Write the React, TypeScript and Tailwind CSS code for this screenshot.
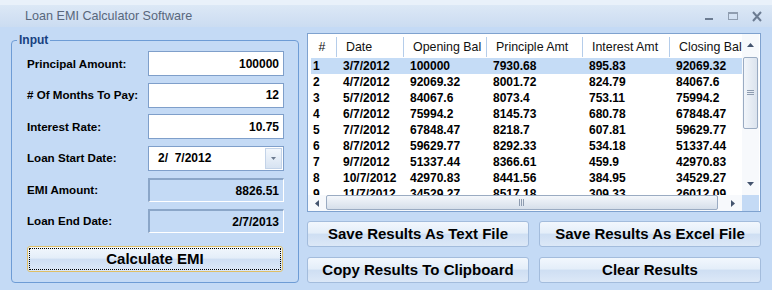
const columns = [
  { label: "#", rowW: "w-[25px]", headW: "w-[28px]" },
  { label: "Date", rowW: "w-[67px]", headW: "w-[67px]" },
  { label: "Opening Bal", rowW: "w-[83px]", headW: "w-[83px]" },
  { label: "Principle Amt", rowW: "w-[96px]", headW: "w-[96px]" },
  { label: "Interest Amt", rowW: "w-[87px]", headW: "w-[87px]" },
  { label: "Closing Bal", rowW: "w-[90px]", headW: "w-[90px]" },
];

const schedule = [
  ["1", "3/7/2012", "100000", "7930.68", "895.83", "92069.32"],
  ["2", "4/7/2012", "92069.32", "8001.72", "824.79", "84067.6"],
  ["3", "5/7/2012", "84067.6", "8073.4", "753.11", "75994.2"],
  ["4", "6/7/2012", "75994.2", "8145.73", "680.78", "67848.47"],
  ["5", "7/7/2012", "67848.47", "8218.7", "607.81", "59629.77"],
  ["6", "8/7/2012", "59629.77", "8292.33", "534.18", "51337.44"],
  ["7", "9/7/2012", "51337.44", "8366.61", "459.9", "42970.83"],
  ["8", "10/7/2012", "42970.83", "8441.56", "384.95", "34529.27"],
  ["9", "11/7/2012", "34529.27", "8517.18", "309.33", "26012.09"],
];

const btn =
  "flex items-center justify-center rounded-[3px] border border-[#a3bcdc] bg-[linear-gradient(to_bottom,#f2f7fd_0%,#e4eef9_45%,#cfdff3_52%,#dce8f7_100%)] text-[15px] font-bold text-black";

function Arrow({ dir }: { dir: "up" | "down" | "left" | "right" }) {
  const pts = {
    up: "0,4 7,4 3.5,0",
    down: "0,0 7,0 3.5,4",
    left: "4,0 4,7 0,3.5",
    right: "0,0 0,7 4,3.5",
  }[dir];
  const horiz = dir === "left" || dir === "right";
  return (
    <svg width={horiz ? 4 : 7} height={horiz ? 7 : 4} viewBox={horiz ? "0 0 4 7" : "0 0 7 4"}>
      <polygon points={pts} fill="#44546e" />
    </svg>
  );
}

function InputRow({ label, children }: { label: string; children: React.ReactNode }) {
  return (
    <div className="flex h-[25px] items-center justify-between">
      <span className="text-[11.6px] font-bold text-black">{label}</span>
      {children}
    </div>
  );
}

function TextBox({ value }: { value: string }) {
  return (
    <div className="flex h-[25px] w-[136px] items-center justify-end border border-[#7f9fca] bg-white pr-[4px] text-[12px] font-bold">
      {value}
    </div>
  );
}

function ReadBox({ value }: { value: string }) {
  return (
    <div className="flex h-[24px] w-[136px] items-start justify-end border-t-2 border-l-2 border-r border-b border-t-[#8ba6c8] border-l-[#8ba6c8] border-r-white border-b-white bg-[#c4daf5] pr-[4px] pt-[2px] text-[12px] font-bold">
      {value}
    </div>
  );
}

export default function App() {
  return (
    <div className="relative h-[290px] w-[772px] overflow-hidden bg-[#c4daf5] font-['Liberation_Sans',Arial,sans-serif] text-black">
      {/* title bar */}
      <div className="h-[5px] bg-[#e9f1fa]" />
      <div className="flex h-[22px] items-center bg-[linear-gradient(to_bottom,#dce8f6,#cbdcf1)] pl-[25px] pr-[10px]">
        <span className="text-[12.6px] text-[#58677c]">Loan EMI Calculator Software</span>
        <div className="ml-auto flex items-center gap-[14px]">
          <svg width="9" height="10" viewBox="0 0 9 10">
            <rect x="0" y="7" width="8" height="2" fill="#6c7c92" />
          </svg>
          <svg width="10" height="10" viewBox="0 0 10 10">
            <rect x="0.5" y="1.5" width="9" height="7" fill="none" stroke="#8f9db0" />
            <rect x="0" y="1" width="10" height="2" fill="#8f9db0" />
          </svg>
          <svg width="10" height="11" viewBox="0 0 10 11">
            <path d="M1 1 L9 10 M9 1 L1 10" stroke="#6c7c92" strokeWidth="2" />
          </svg>
        </div>
      </div>

      <div className="flex pl-[11px] pt-[6px]">
        {/* input group */}
        <fieldset className="m-0 h-[250px] w-[288px] rounded-[4px] border border-[#6e9cd5] p-0">
          <legend className="ml-[5px] px-[2px] text-[12px] font-bold leading-[14px] text-[#17417f]">Input</legend>
          <div className="flex flex-col gap-[6.5px] pl-[15px] pr-[14px] pt-[4px]">
            <InputRow label="Principal Amount:">
              <TextBox value="100000" />
            </InputRow>
            <InputRow label="# Of Months To Pay:">
              <TextBox value="12" />
            </InputRow>
            <InputRow label="Interest Rate:">
              <TextBox value="10.75" />
            </InputRow>
            <InputRow label="Loan Start Date:">
              <div className="flex h-[25px] w-[136px] items-center border border-[#7f9fca] bg-white">
                <span className="whitespace-pre pl-[9px] text-[12px] font-bold">{"2/  7/2012"}</span>
                <div className="ml-auto mr-[1px] flex h-[21px] w-[17px] items-center justify-center border border-[#c3d3e8] bg-[linear-gradient(to_bottom,#f3f7fc,#d7e3f2)]">
                  <svg width="5" height="3" viewBox="0 0 5 3">
                    <polygon points="0,0 5,0 2.5,3" fill="#6d7b8f" />
                  </svg>
                </div>
              </div>
            </InputRow>
            <InputRow label="EMI Amount:">
              <ReadBox value="8826.51" />
            </InputRow>
            <InputRow label="Loan End Date:">
              <ReadBox value="2/7/2013" />
            </InputRow>
            <button
              className={`${btn} mt-[6px] h-[26px] w-[256px] border-[#dfbf66] outline-1 outline-dotted outline-offset-[-3px] outline-black`}
            >
              Calculate EMI
            </button>
          </div>
        </fieldset>

        {/* results */}
        <div className="ml-[8px] flex w-[454px] flex-col">
          <div className="flex h-[179px] flex-col border border-[#7fa2cf] bg-white">
            <div className="flex h-[161px]">
              <div className="w-[434px] overflow-hidden">
                <div className="flex h-[24px] w-[451px] items-center pt-[2px] text-[12.4px] text-[#111]">
                  {columns.map((c, i) => (
                    <div
                      key={c.label}
                      className={`${c.headW} flex h-[20px] shrink-0 items-center whitespace-nowrap ${
                        i === 0 ? "justify-center" : "border-l border-[#b5cdea] pl-[9px]"
                      }`}
                    >
                      {c.label}
                    </div>
                  ))}
                </div>
                <div className="ml-[3px]">
                  {schedule.map((r, ri) => (
                    <div key={r[0]} className={`flex h-[16px] w-[448px] items-center text-[12px] font-bold ${ri === 0 ? "bg-[#c5dcf6]" : ""}`}>
                      {r.map((v, i) => (
                        <div key={i} className={`${columns[i].rowW} shrink-0 whitespace-nowrap ${i === 0 ? "pl-[2px]" : "pl-[7px]"}`}>
                          {v}
                        </div>
                      ))}
                    </div>
                  ))}
                </div>
              </div>
              {/* vertical scrollbar */}
              <div className="flex w-[17px] flex-col bg-[#f7f9fc]">
                <div className="flex h-[22px] items-center justify-center">
                  <Arrow dir="up" />
                </div>
                <div className="mx-[1px] mt-[1px] flex h-[72px] items-center justify-center rounded-[2px] border border-[#9aabc2] bg-[linear-gradient(to_right,#f1f5fa,#dbe3ee)]">
                  <svg width="7" height="6" viewBox="0 0 7 6">
                    <path d="M0 0.5H7M0 2.5H7M0 4.5H7" stroke="#8e9cb0" />
                  </svg>
                </div>
                <div className="flex-1" />
                <div className="flex h-[22px] items-center justify-center">
                  <Arrow dir="down" />
                </div>
              </div>
            </div>
            {/* horizontal scrollbar */}
            <div className="flex h-[16px]">
              <div className="flex w-[434px] bg-[#f7f9fc]">
                <div className="flex w-[18px] items-center justify-center">
                  <Arrow dir="left" />
                </div>
                <div className="flex h-[15px] w-[392px] items-center justify-center rounded-[2px] border border-[#9aabc2] bg-[linear-gradient(to_bottom,#f4f7fb,#d6dfea)]">
                  <svg width="6" height="7" viewBox="0 0 6 7">
                    <path d="M0.5 0V7M2.5 0V7M4.5 0V7" stroke="#8e9cb0" />
                  </svg>
                </div>
                <div className="flex-1" />
                <div className="flex w-[18px] items-center justify-center">
                  <Arrow dir="right" />
                </div>
              </div>
              <div className="w-[17px] bg-[#c4daf5]" />
            </div>
          </div>

          <div className="mt-[9px] grid grid-cols-2 gap-x-[10px] gap-y-[10px]">
            <button className={`${btn} h-[26px]`}>Save Results As Text File</button>
            <button className={`${btn} h-[26px]`}>Save Results As Excel File</button>
            <button className={`${btn} h-[26px]`}>Copy Results To Clipboard</button>
            <button className={`${btn} h-[26px]`}>Clear Results</button>
          </div>
        </div>
      </div>
    </div>
  );
}
